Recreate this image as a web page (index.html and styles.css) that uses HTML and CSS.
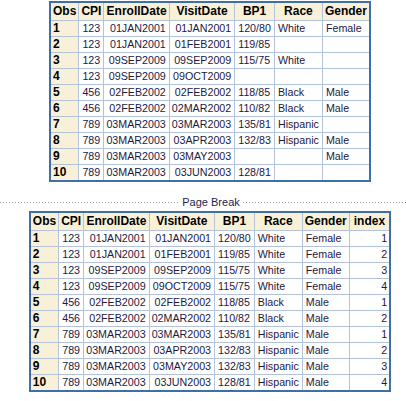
FILE: index.html
```html
<!DOCTYPE html>
<html>
<head>
<meta charset="utf-8">
<link rel="stylesheet" href="styles.css">
</head>
<body>
<div class="page">
  <table class="tbl">
    <thead>
      <tr><th class="hl">Obs</th><th>CPI</th><th>EnrollDate</th><th>VisitDate</th><th>BP1</th><th>Race</th><th>Gender</th></tr>
    </thead>
    <tbody>
      <tr><th class="rh">1</th><td>123</td><td class="d">01JAN2001</td><td class="d">01JAN2001</td><td>120/80</td><td>White</td><td>Female</td></tr>
      <tr><th class="rh">2</th><td>123</td><td class="d">01JAN2001</td><td class="d">01FEB2001</td><td>119/85</td><td></td><td></td></tr>
      <tr><th class="rh">3</th><td>123</td><td class="d">09SEP2009</td><td class="d">09SEP2009</td><td>115/75</td><td>White</td><td></td></tr>
      <tr><th class="rh">4</th><td>123</td><td class="d">09SEP2009</td><td class="d">09OCT2009</td><td></td><td></td><td></td></tr>
      <tr><th class="rh">5</th><td>456</td><td class="d">02FEB2002</td><td class="d">02FEB2002</td><td>118/85</td><td>Black</td><td>Male</td></tr>
      <tr><th class="rh">6</th><td>456</td><td class="d">02FEB2002</td><td class="d">02MAR2002</td><td>110/82</td><td>Black</td><td>Male</td></tr>
      <tr><th class="rh">7</th><td>789</td><td class="d">03MAR2003</td><td class="d">03MAR2003</td><td>135/81</td><td>Hispanic</td><td></td></tr>
      <tr><th class="rh">8</th><td>789</td><td class="d">03MAR2003</td><td class="d">03APR2003</td><td>132/83</td><td>Hispanic</td><td>Male</td></tr>
      <tr><th class="rh">9</th><td>789</td><td class="d">03MAR2003</td><td class="d">03MAY2003</td><td></td><td></td><td>Male</td></tr>
      <tr><th class="rh">10</th><td>789</td><td class="d">03MAR2003</td><td class="d">03JUN2003</td><td>128/81</td><td></td><td></td></tr>
    </tbody>
  </table>

  <div class="pb"><span class="pb-text">Page Break</span></div>

  <table class="tbl">
    <thead>
      <tr><th class="hl">Obs</th><th>CPI</th><th>EnrollDate</th><th>VisitDate</th><th>BP1</th><th>Race</th><th>Gender</th><th class="hi">index</th></tr>
    </thead>
    <tbody>
      <tr><th class="rh">1</th><td>123</td><td class="d">01JAN2001</td><td class="d">01JAN2001</td><td>120/80</td><td>White</td><td>Female</td><td class="n">1</td></tr>
      <tr><th class="rh">2</th><td>123</td><td class="d">01JAN2001</td><td class="d">01FEB2001</td><td>119/85</td><td>White</td><td>Female</td><td class="n">2</td></tr>
      <tr><th class="rh">3</th><td>123</td><td class="d">09SEP2009</td><td class="d">09SEP2009</td><td>115/75</td><td>White</td><td>Female</td><td class="n">3</td></tr>
      <tr><th class="rh">4</th><td>123</td><td class="d">09SEP2009</td><td class="d">09OCT2009</td><td>115/75</td><td>White</td><td>Female</td><td class="n">4</td></tr>
      <tr><th class="rh">5</th><td>456</td><td class="d">02FEB2002</td><td class="d">02FEB2002</td><td>118/85</td><td>Black</td><td>Male</td><td class="n">1</td></tr>
      <tr><th class="rh">6</th><td>456</td><td class="d">02FEB2002</td><td class="d">02MAR2002</td><td>110/82</td><td>Black</td><td>Male</td><td class="n">2</td></tr>
      <tr><th class="rh">7</th><td>789</td><td class="d">03MAR2003</td><td class="d">03MAR2003</td><td>135/81</td><td>Hispanic</td><td>Male</td><td class="n">1</td></tr>
      <tr><th class="rh">8</th><td>789</td><td class="d">03MAR2003</td><td class="d">03APR2003</td><td>132/83</td><td>Hispanic</td><td>Male</td><td class="n">2</td></tr>
      <tr><th class="rh">9</th><td>789</td><td class="d">03MAR2003</td><td class="d">03MAY2003</td><td>132/83</td><td>Hispanic</td><td>Male</td><td class="n">3</td></tr>
      <tr><th class="rh">10</th><td>789</td><td class="d">03MAR2003</td><td class="d">03JUN2003</td><td>128/81</td><td>Hispanic</td><td>Male</td><td class="n">4</td></tr>
    </tbody>
  </table>
</div>
</body>
</html>
```
FILE: styles.css
```css
html, body {
  margin: 0;
  padding: 0;
  background: #ffffff;
  overflow: hidden;
}

body {
  font-family: "Liberation Sans", Arial, sans-serif;
}

.page {
  width: 392px;
  padding: 1px 0 0 14px;
}

.tbl {
  border-collapse: collapse;
  border: 2px solid #3f6fa6;
  margin: 0 auto;
}

.tbl th,
.tbl td {
  border: 1px solid #b3c3dc;
  padding: 0 2px;
  white-space: nowrap;
  vertical-align: middle;
}

.tbl th {
  background: #f8f1d8;
  color: #000000;
  font-weight: bold;
  font-size: 12px;
  line-height: 15px;
  height: 17px;
  text-align: center;
}

.tbl th.hl,
.tbl th.rh {
  text-align: left;
}

.tbl th.hi {
  padding: 0 4px;
}

.tbl th.rh {
  height: 15px;
  line-height: 13px;
}

.tbl td {
  font-size: 10.7px;
  color: #22193f;
  line-height: 13px;
  height: 15px;
  padding: 0 3px;
  text-align: left;
}

.tbl td.d {
  text-align: right;
  padding: 0 3px 0 2px;
}

.tbl td.n {
  text-align: right;
  padding: 0 2px;
}

.pb {
  width: 422px;
  margin: 13px 0 2px -14px;
  display: flex;
  align-items: center;
  gap: 3px;
}

.pb::before,
.pb::after {
  content: "";
  flex: 1;
  height: 1px;
  background: repeating-linear-gradient(to right, #9a9a9a 0 1px, transparent 1px 3px);
}

.pb-text {
  font-size: 11px;
  line-height: 14px;
  color: #24244e;
}
```
